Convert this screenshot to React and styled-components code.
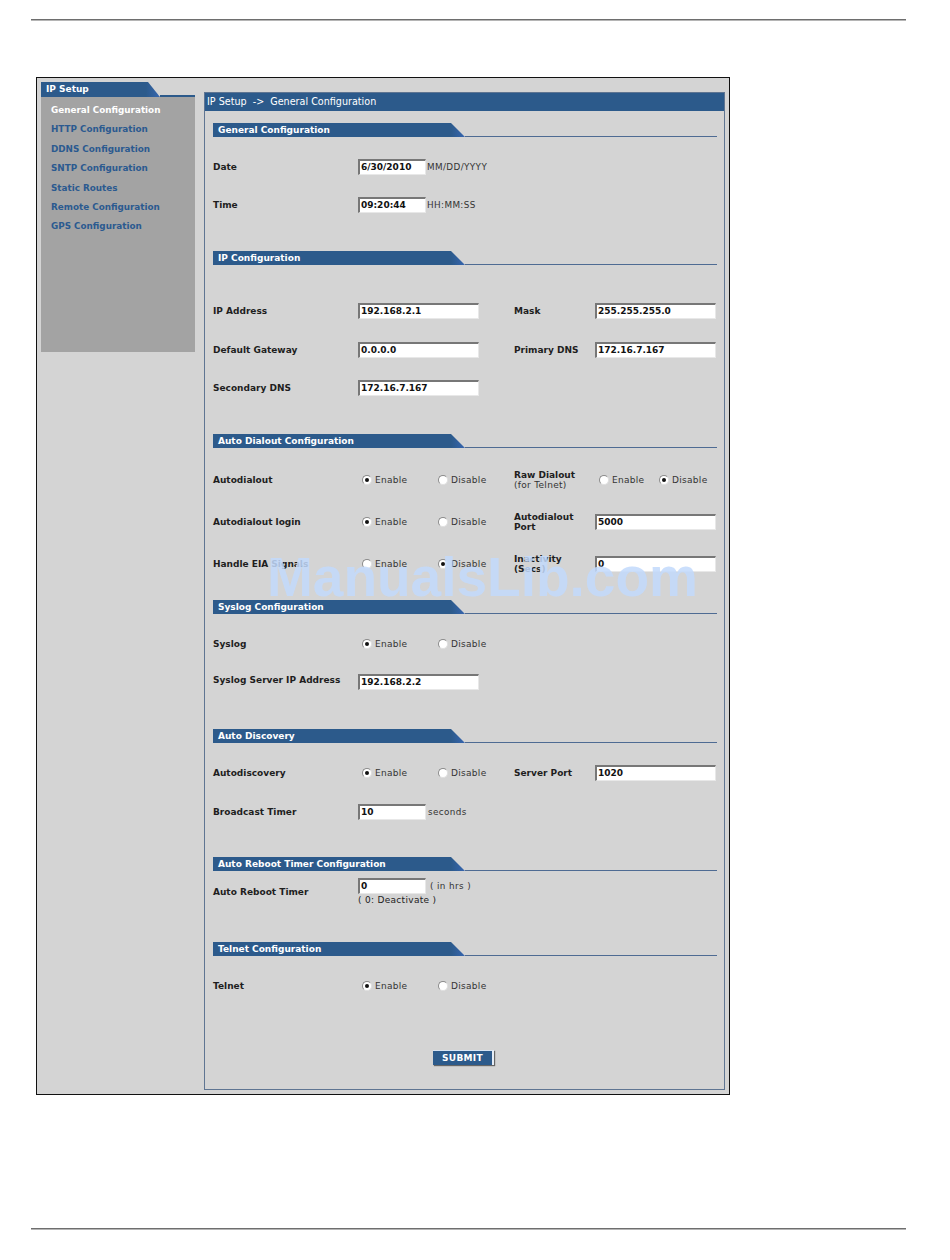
import React from "react";
import styled, { createGlobalStyle } from "styled-components";

const Global = createGlobalStyle`
  html, body { margin: 0; padding: 0; background: #fff; }
  body { font-family: "DejaVu Sans", Verdana, sans-serif; }
  * { box-sizing: border-box; }
`;

const BLUE = "#2c5a8b";

const Page = styled.div`
  width: 950px;
  height: 1260px;
  padding-top: 19px;
  display: flex;
  flex-direction: column;
`;

const PageRule = styled.div`
  margin-left: 31px;
  width: 875px;
  height: 2px;
  background: #6e6e6e;
  border-bottom: 1px solid #b5b5b5;
  margin-top: ${(p) => p.$top || 0}px;
`;

const Frame = styled.div`
  position: relative;
  margin-top: 56px;
  margin-left: 36px;
  width: 694px;
  height: 1018px;
  border: 1px solid #111;
  background: #d4d4d4;
  padding: 4px;
  display: flex;
  gap: 9px;
  align-items: flex-start;
`;

const Sidebar = styled.div`
  width: 154px;
  display: flex;
  flex-direction: column;
`;

const TabHeader = styled.div`
  display: flex;
  align-items: flex-end;
  width: 100%;
`;

const Tab = styled.div`
  width: ${(p) => p.$w}px;
  height: ${(p) => p.$h}px;
  background: linear-gradient(to right, ${BLUE} 0, ${BLUE} calc(100% - 14px), #3766b0 100%);
  clip-path: polygon(0 0, calc(100% - ${(p) => p.$slant}px) 0, 100% 100%, 0 100%);
  color: #fff;
  font-weight: bold;
  font-size: ${(p) => p.$fs || 9}px;
  line-height: ${(p) => p.$h}px;
  padding-left: ${(p) => p.$pl}px;
  white-space: nowrap;
  flex-shrink: 0;
`;

const TabRule = styled.div`
  flex: 1;
  height: ${(p) => p.$t}px;
  background: ${(p) => p.$c};
`;

const NavPanel = styled.div`
  background: #a3a3a3;
  height: 255px;
  padding: 4px 0 0 10px;
  display: flex;
  flex-direction: column;
`;

const NavItem = styled.div`
  font-size: 8.8px;
  font-weight: bold;
  line-height: 19.4px;
  color: ${(p) => (p.$active ? "#ffffff" : "#2b5a90")};
  white-space: nowrap;
`;

const Main = styled.div`
  margin-top: 10px;
  width: 521px;
  height: 998px;
  border: 1px solid #5f7592;
  display: flex;
  flex-direction: column;
`;

const TitleBar = styled.div`
  height: 18px;
  background: ${BLUE};
  color: #fff;
  font-size: 9.6px;
  line-height: 18px;
  padding-left: 2px;
  white-space: pre;
`;

const Content = styled.div`
  padding: 0 7px 0 8px;
  display: flex;
  flex-direction: column;
`;

const Section = styled.div`
  margin-top: ${(p) => p.$top}px;
  display: flex;
  flex-direction: column;
`;

const Row = styled.div`
  margin-top: ${(p) => p.$top}px;
  height: ${(p) => p.$h || 20}px;
  display: grid;
  grid-template-columns: 145px 156px 81px 121px;
  align-items: ${(p) => p.$align || "center"};
`;

const Label = styled.div`
  font-size: 9px;
  font-weight: bold;
  color: #1e1e1e;
  line-height: 10px;
  white-space: nowrap;
  margin-top: ${(p) => p.$mt || 0}px;
`;

const Sub = styled.span`
  display: block;
  font-weight: normal;
  color: #333;
  letter-spacing: 0.3px;
`;

const Cell = styled.div`
  display: flex;
  align-items: ${(p) => p.$align || "center"};
  flex-wrap: wrap;
`;

const TextInput = styled.div`
  width: ${(p) => p.$w || 121}px;
  height: 16px;
  background: #fff;
  border-top: 2px solid #777;
  border-left: 2px solid #777;
  border-right: 1px solid #e8e8e8;
  border-bottom: 1px solid #e8e8e8;
  font-size: 9px;
  font-weight: bold;
  color: #111;
  line-height: 13px;
  padding-left: 1px;
  white-space: nowrap;
`;

const Unit = styled.span`
  font-size: 8.8px;
  letter-spacing: 0.4px;
  color: #333;
  margin-left: ${(p) => p.$ml || 1}px;
  white-space: nowrap;
`;

const Note = styled.div`
  width: 100%;
  font-size: 9px;
  letter-spacing: 0.3px;
  color: #222;
  margin-top: 1px;
  white-space: pre;
`;

const RadioGroup = styled.div`
  display: grid;
  grid-template-columns: ${(p) => p.$cols};
  padding-left: 4px;
  align-items: center;
`;

const RadioOpt = styled.div`
  display: flex;
  align-items: center;
  gap: 3px;
  font-size: 9px;
  letter-spacing: 0.3px;
  color: #333;
  white-space: nowrap;
`;

const Dot = styled.span`
  flex-shrink: 0;
  width: 10px;
  height: 10px;
  border-radius: 50%;
  background: #fff;
  border: 1px solid #8a8a8a;
  border-right-color: #e0e0e0;
  border-bottom-color: #e0e0e0;
  position: relative;
  &::after {
    content: "";
    display: ${(p) => (p.$on ? "block" : "none")};
    position: absolute;
    left: 2px;
    top: 2px;
    width: 4px;
    height: 4px;
    border-radius: 50%;
    background: #111;
  }
`;

const SubmitWrap = styled.div`
  margin-top: 54px;
  display: flex;
  justify-content: center;
  padding-right: 3px;
`;

const Submit = styled.div`
  width: 61px;
  height: 15px;
  background: ${BLUE};
  color: #fff;
  font-size: 9px;
  font-weight: bold;
  line-height: 14px;
  text-align: center;
  border-top: 1px solid #d8e4f2;
  border-right: 2px solid #e6edf6;
  box-shadow: 1px 1px 1px #666;
  letter-spacing: 0.3px;
`;

const Watermark = styled.div`
  position: absolute;
  left: 230px;
  top: 467px;
  font-family: "Liberation Sans", Arial, sans-serif;
  font-weight: bold;
  font-size: 55px;
  color: rgba(194, 218, 252, 0.86);
  pointer-events: none;
  white-space: nowrap;
`;

function Header({ title }) {
  return (
    <TabHeader>
      <Tab $w={252} $h={14} $slant={14} $pl={5} $fs={9}>
        {title}
      </Tab>
      <TabRule $t={1} $c="#4e6b93" />
    </TabHeader>
  );
}

function Radios({ value, cols = "76px auto" }) {
  return (
    <RadioGroup $cols={cols}>
      <RadioOpt>
        <Dot $on={value === "en"} />
        Enable
      </RadioOpt>
      <RadioOpt>
        <Dot $on={value === "dis"} />
        Disable
      </RadioOpt>
    </RadioGroup>
  );
}

const nav = [
  "General Configuration",
  "HTTP Configuration",
  "DDNS Configuration",
  "SNTP Configuration",
  "Static Routes",
  "Remote Configuration",
  "GPS Configuration",
];

export default function App() {
  return (
    <>
      <Global />
      <Page>
        <PageRule />
        <Frame>
          <Sidebar>
            <TabHeader>
              <Tab $w={119} $h={15} $slant={12} $pl={5} $fs={9}>
                IP Setup
              </Tab>
              <TabRule $t={2} $c={BLUE} />
            </TabHeader>
            <NavPanel>
              {nav.map((n, i) => (
                <NavItem key={n} $active={i === 0}>
                  {n}
                </NavItem>
              ))}
            </NavPanel>
          </Sidebar>

          <Main>
            <TitleBar>{"IP Setup  ->  General Configuration"}</TitleBar>
            <Content>
              <Section $top={12}>
                <Header title="General Configuration" />
                <Row $top={20}>
                  <Label>Date</Label>
                  <Cell>
                    <TextInput $w={68}>6/30/2010</TextInput>
                    <Unit>MM/DD/YYYY</Unit>
                  </Cell>
                </Row>
                <Row $top={18}>
                  <Label>Time</Label>
                  <Cell>
                    <TextInput $w={68}>09:20:44</TextInput>
                    <Unit>HH:MM:SS</Unit>
                  </Cell>
                </Row>
              </Section>

              <Section $top={36}>
                <Header title="IP Configuration" />
                <Row $top={36}>
                  <Label>IP Address</Label>
                  <Cell>
                    <TextInput>192.168.2.1</TextInput>
                  </Cell>
                  <Label>Mask</Label>
                  <Cell>
                    <TextInput>255.255.255.0</TextInput>
                  </Cell>
                </Row>
                <Row $top={19}>
                  <Label>Default Gateway</Label>
                  <Cell>
                    <TextInput>0.0.0.0</TextInput>
                  </Cell>
                  <Label>Primary DNS</Label>
                  <Cell>
                    <TextInput>172.16.7.167</TextInput>
                  </Cell>
                </Row>
                <Row $top={18}>
                  <Label>Secondary DNS</Label>
                  <Cell>
                    <TextInput>172.16.7.167</TextInput>
                  </Cell>
                </Row>
              </Section>

              <Section $top={36}>
                <Header title="Auto Dialout Configuration" />
                <Row $top={22}>
                  <Label>Autodialout</Label>
                  <Radios value="en" />
                  <Label>
                    Raw Dialout
                    <Sub>(for Telnet)</Sub>
                  </Label>
                  <RadioGroup $cols="60px auto">
                    <RadioOpt>
                      <Dot />
                      Enable
                    </RadioOpt>
                    <RadioOpt>
                      <Dot $on />
                      Disable
                    </RadioOpt>
                  </RadioGroup>
                </Row>
                <Row $top={22}>
                  <Label>Autodialout login</Label>
                  <Radios value="en" />
                  <Label>
                    Autodialout
                    <br />
                    Port
                  </Label>
                  <Cell>
                    <TextInput>5000</TextInput>
                  </Cell>
                </Row>
                <Row $top={22}>
                  <Label>Handle EIA Signals</Label>
                  <Radios value="dis" />
                  <Label>
                    Inactivity
                    <br />
                    (Secs)
                  </Label>
                  <Cell>
                    <TextInput>0</TextInput>
                  </Cell>
                </Row>
              </Section>

              <Section $top={26}>
                <Header title="Syslog Configuration" />
                <Row $top={20}>
                  <Label>Syslog</Label>
                  <Radios value="en" />
                </Row>
                <Row $top={18}>
                  <Label $mt={-5}>Syslog Server IP Address</Label>
                  <Cell>
                    <TextInput>192.168.2.2</TextInput>
                  </Cell>
                </Row>
              </Section>

              <Section $top={37}>
                <Header title="Auto Discovery" />
                <Row $top={20}>
                  <Label>Autodiscovery</Label>
                  <Radios value="en" />
                  <Label>Server Port</Label>
                  <Cell>
                    <TextInput>1020</TextInput>
                  </Cell>
                </Row>
                <Row $top={19}>
                  <Label>Broadcast Timer</Label>
                  <Cell>
                    <TextInput $w={68}>10</TextInput>
                    <Unit $ml={2}>seconds</Unit>
                  </Cell>
                </Row>
              </Section>

              <Section $top={35}>
                <Header title="Auto Reboot Timer Configuration" />
                <Row $top={7} $h={30} $align="start">
                  <Label $mt={9}>Auto Reboot Timer</Label>
                  <Cell $align="center">
                    <TextInput $w={68}>0</TextInput>
                    <Unit $ml={4}>( in hrs )</Unit>
                    <Note>{"( 0: Deactivate )"}</Note>
                  </Cell>
                </Row>
              </Section>

              <Section $top={34}>
                <Header title="Telnet Configuration" />
                <Row $top={20}>
                  <Label>Telnet</Label>
                  <Radios value="en" />
                </Row>
              </Section>

              <SubmitWrap>
                <Submit>SUBMIT</Submit>
              </SubmitWrap>
            </Content>
          </Main>
          <Watermark>ManualsLib.com</Watermark>
        </Frame>
        <PageRule $top={133} />
      </Page>
    </>
  );
}
